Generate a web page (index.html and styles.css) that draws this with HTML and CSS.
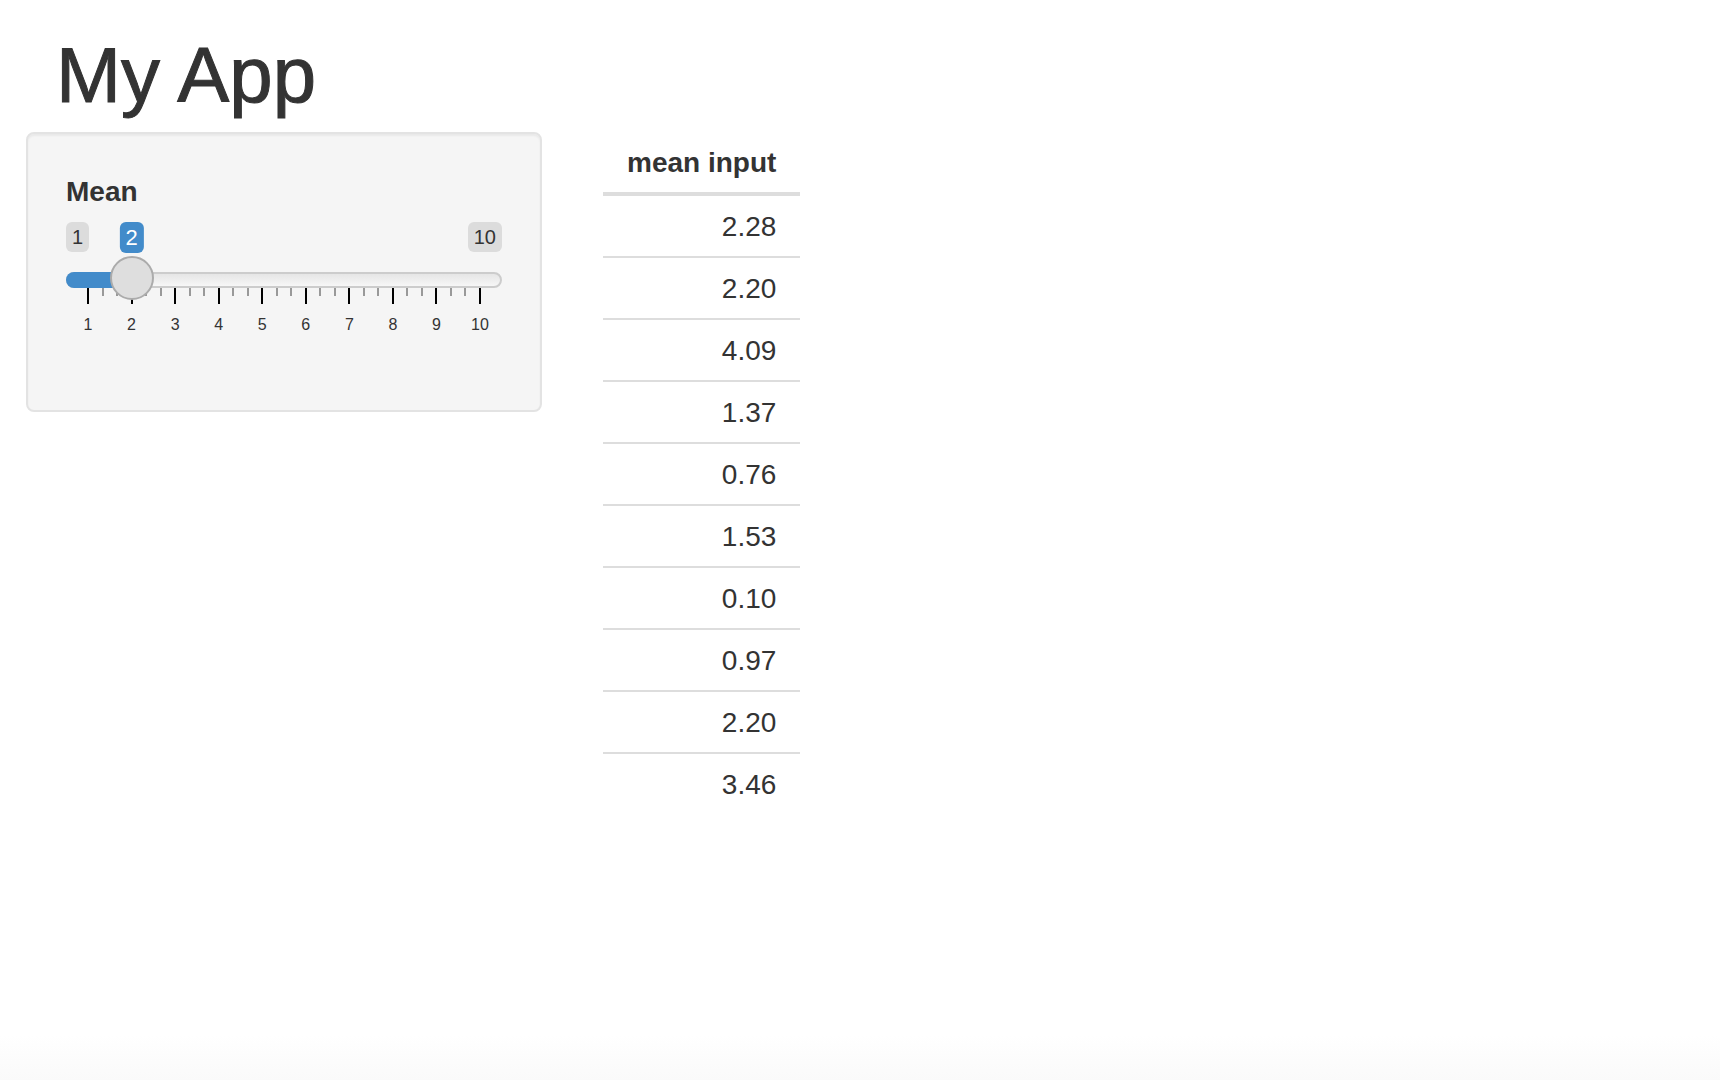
FILE: index.html
```html
<!DOCTYPE html>
<html>
<head>
<meta charset="utf-8">
<title>My App</title>
<link rel="stylesheet" href="styles.css">
</head>
<body>
<div class="page">
  <h1 class="title">My App</h1>
  <div class="layout">
    <div class="sidebar">
      <div class="well">
        <label class="label">Mean</label>
        <div class="irs">
          <span class="irs-line"></span>
          <span class="irs-bar" style="width:65.56px"></span>
          <span class="irs-min">1</span>
          <span class="irs-max">10</span>
          <span class="irs-single" style="left:65.56px">2</span>
          <span class="irs-handle" style="left:43.56px"></span>
          <div class="irs-grid">
            <span class="pol" style="left:22px"></span>
            <span class="pol small" style="left:36.52px"></span>
            <span class="pol small" style="left:51.04px"></span>
            <span class="pol" style="left:65.56px"></span>
            <span class="pol small" style="left:80.07px"></span>
            <span class="pol small" style="left:94.59px"></span>
            <span class="pol" style="left:109.11px"></span>
            <span class="pol small" style="left:123.63px"></span>
            <span class="pol small" style="left:138.15px"></span>
            <span class="pol" style="left:152.67px"></span>
            <span class="pol small" style="left:167.19px"></span>
            <span class="pol small" style="left:181.70px"></span>
            <span class="pol" style="left:196.22px"></span>
            <span class="pol small" style="left:210.74px"></span>
            <span class="pol small" style="left:225.26px"></span>
            <span class="pol" style="left:239.78px"></span>
            <span class="pol small" style="left:254.30px"></span>
            <span class="pol small" style="left:268.81px"></span>
            <span class="pol" style="left:283.33px"></span>
            <span class="pol small" style="left:297.85px"></span>
            <span class="pol small" style="left:312.37px"></span>
            <span class="pol" style="left:326.89px"></span>
            <span class="pol small" style="left:341.41px"></span>
            <span class="pol small" style="left:355.93px"></span>
            <span class="pol" style="left:370.44px"></span>
            <span class="pol small" style="left:384.96px"></span>
            <span class="pol small" style="left:399.48px"></span>
            <span class="pol" style="left:414px"></span>
            <span class="txt" style="left:22px">1</span>
            <span class="txt" style="left:65.56px">2</span>
            <span class="txt" style="left:109.11px">3</span>
            <span class="txt" style="left:152.67px">4</span>
            <span class="txt" style="left:196.22px">5</span>
            <span class="txt" style="left:239.78px">6</span>
            <span class="txt" style="left:283.33px">7</span>
            <span class="txt" style="left:326.89px">8</span>
            <span class="txt" style="left:370.44px">9</span>
            <span class="txt" style="left:414px">10</span>
          </div>
        </div>
      </div>
    </div>
    <div class="main">
      <table class="tbl">
        <thead><tr><th>mean input</th></tr></thead>
        <tbody>
          <tr><td>2.28</td></tr>
          <tr><td>2.20</td></tr>
          <tr><td>4.09</td></tr>
          <tr><td>1.37</td></tr>
          <tr><td>0.76</td></tr>
          <tr><td>1.53</td></tr>
          <tr><td>0.10</td></tr>
          <tr><td>0.97</td></tr>
          <tr><td>2.20</td></tr>
          <tr><td>3.46</td></tr>
        </tbody>
      </table>
    </div>
  </div>
</div>
</body>
</html>
```
FILE: styles.css
```css
html {
  background: linear-gradient(to bottom, #ffffff 0, #ffffff 1035px, #fafafa 1080px);
  min-height: 100%;
}
body {
  margin: 0;
  font-family: "Liberation Sans", Arial, Helvetica, sans-serif;
  color: #333;
  min-height: 1080px;
}
.title {
  margin: 0;
  padding: 35px 0 0 56px;
  font-size: 78px;
  font-weight: 400;
  -webkit-text-stroke: 1px #333;
  line-height: 80px;
  color: #333;
  height: 97px;
}
.layout {
  display: flex;
  align-items: flex-start;
}
.sidebar {
  margin-left: 26px;
  width: 516px;
  flex: none;
}
.well {
  background: #f5f5f5;
  border: 2px solid #e3e3e3;
  border-radius: 8px;
  box-shadow: inset 0 2px 2px rgba(0, 0, 0, 0.05);
  padding: 38px 38px 68px 38px;
}
.label {
  display: block;
  font-size: 28px;
  font-weight: bold;
  line-height: 40px;
  margin-bottom: 10px;
  color: #333;
}
.irs {
  position: relative;
  height: 120px;
  width: 436px;
}
.irs-line {
  position: absolute;
  left: 0;
  right: 0;
  top: 50px;
  height: 16px;
  box-sizing: border-box;
  border: 2px solid #cccccc;
  border-radius: 16px;
  background: linear-gradient(to bottom, #dddddd -50%, #ffffff 150%);
}
.irs-bar {
  position: absolute;
  left: 0;
  top: 50px;
  height: 16px;
  background: #428bca;
  border-radius: 16px 0 0 16px;
}
.irs-min, .irs-max, .irs-single {
  position: absolute;
  top: 0;
  font-size: 20px;
  line-height: 26px;
  padding: 2px 6px;
  border-radius: 6px;
  background: rgba(0, 0, 0, 0.1);
  color: #333;
}
.irs-min { left: 0; }
.irs-max { right: 0; }
.irs-single {
  font-size: 22px;
  line-height: 27px;
  background: #428bca;
  color: #fff;
  transform: translateX(-50%);
}
.irs-handle {
  position: absolute;
  top: 34px;
  width: 44px;
  height: 44px;
  box-sizing: border-box;
  border: 2px solid #ababab;
  border-radius: 50%;
  background: #dedede;
  z-index: 2;
}
.irs-grid {
  position: absolute;
  left: 0;
  right: 0;
  top: 66px;
  height: 54px;
}
.pol {
  position: absolute;
  top: 0;
  width: 2px;
  height: 16px;
  margin-left: -1px;
  background: #000;
}
.pol.small {
  height: 8px;
  background: #999;
}
.txt {
  position: absolute;
  top: 28px;
  font-size: 16px;
  line-height: 18px;
  color: #333;
  transform: translateX(-50%);
  white-space: nowrap;
}
.main {
  margin-left: 61px;
}
.tbl {
  border-collapse: collapse;
  font-size: 28px;
  line-height: 40px;
  color: #333;
}
.tbl th {
  font-weight: bold;
  text-align: right;
  padding: 11px 24px 9px 24px;
  border-bottom: 4px solid #dddddd;
}
.tbl td {
  text-align: right;
  padding: 11px 24px 9px 24px;
  border-top: 2px solid #dddddd;
}
.tbl tbody tr:first-child td {
  border-top: 0;
}
```
